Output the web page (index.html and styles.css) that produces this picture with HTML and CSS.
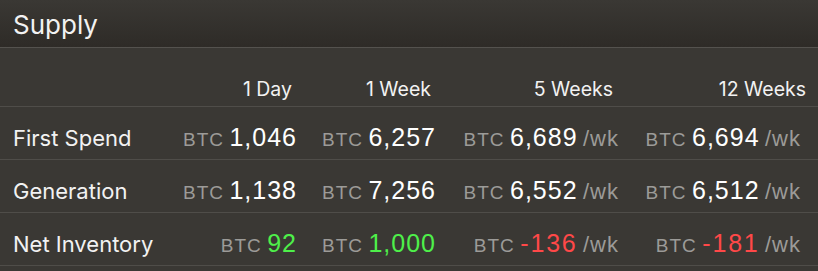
FILE: index.html
```html
<!DOCTYPE html>
<html>
<head>
<meta charset="utf-8">
<link rel="stylesheet" href="styles.css">
</head>
<body>
<div class="panel">
  <div class="panel-head">Supply</div>
  <div class="table">
    <div class="row head-row">
      <div class="label"></div>
      <div class="th c1">1 Day</div>
      <div class="th c2">1 Week</div>
      <div class="th c3">5 Weeks</div>
      <div class="th c4">12 Weeks</div>
    </div>
    <div class="row">
      <div class="label">First Spend</div>
      <div class="td c1"><span class="unit">BTC</span> <span class="num">1,046</span></div>
      <div class="td c2"><span class="unit">BTC</span> <span class="num">6,257</span></div>
      <div class="td c3"><span class="unit">BTC</span> <span class="num">6,689</span> <span class="per">/wk</span></div>
      <div class="td c4"><span class="unit">BTC</span> <span class="num">6,694</span> <span class="per">/wk</span></div>
    </div>
    <div class="row">
      <div class="label">Generation</div>
      <div class="td c1"><span class="unit">BTC</span> <span class="num">1,138</span></div>
      <div class="td c2"><span class="unit">BTC</span> <span class="num">7,256</span></div>
      <div class="td c3"><span class="unit">BTC</span> <span class="num">6,552</span> <span class="per">/wk</span></div>
      <div class="td c4"><span class="unit">BTC</span> <span class="num">6,512</span> <span class="per">/wk</span></div>
    </div>
    <div class="row">
      <div class="label">Net Inventory</div>
      <div class="td c1"><span class="unit">BTC</span> <span class="num pos">92</span></div>
      <div class="td c2"><span class="unit">BTC</span> <span class="num pos">1,000</span></div>
      <div class="td c3"><span class="unit">BTC</span> <span class="num neg">-136</span> <span class="per">/wk</span></div>
      <div class="td c4"><span class="unit">BTC</span> <span class="num neg">-181</span> <span class="per">/wk</span></div>
    </div>
  </div>
</div>
</body>
</html>
```

FILE: styles.css
```css
html, body {
  margin: 0;
  padding: 0;
  background: #3a3834;
}

.panel {
  width: 818px;
  background: #3a3834;
  color: #f2f2f2;
  font-family: Inter, "Liberation Sans", sans-serif;
}

.panel-head {
  height: 47px;
  border-bottom: 1px solid #54524e;
  background: linear-gradient(to bottom, #3a3834, #2e2b27);
  padding-left: 13px;
  font-size: 26px;
  line-height: 50px;
  color: #f2f2f2;
  box-sizing: content-box;
  overflow: hidden;
}

.row {
  display: grid;
  grid-template-columns: 157px 127px 139px 183px 187px;
  align-items: baseline;
  height: 53px;
  box-sizing: border-box;
  padding: 16px 12px 0 13px;
  border-bottom: 1px solid #4f4d49;
}

.head-row {
  height: 59px;
  padding-top: 29px;
}

.label {
  font-size: 22px;
  color: #f2f2f2;
}

.th {
  text-align: right;
  font-size: 19.5px;
  color: #f2f2f2;
}

.th.c1, .th.c2 { padding-right: 5px; }
.th.c3 { padding-right: 6px; }

.td {
  text-align: right;
  white-space: nowrap;
  font-family: "Liberation Sans", Arial, sans-serif;
  letter-spacing: 1px;
}

.td.c4 { padding-right: 5px; }

.unit {
  font-size: 19px;
  color: #9c9b98;
}

.num {
  font-size: 25px;
  color: #ffffff;
}

.per {
  font-size: 22px;
  letter-spacing: 1px;
  color: #9c9b98;
}

.pos { color: #4ef04a; }
.neg { color: #ff4848; letter-spacing: 1.8px; }
```
